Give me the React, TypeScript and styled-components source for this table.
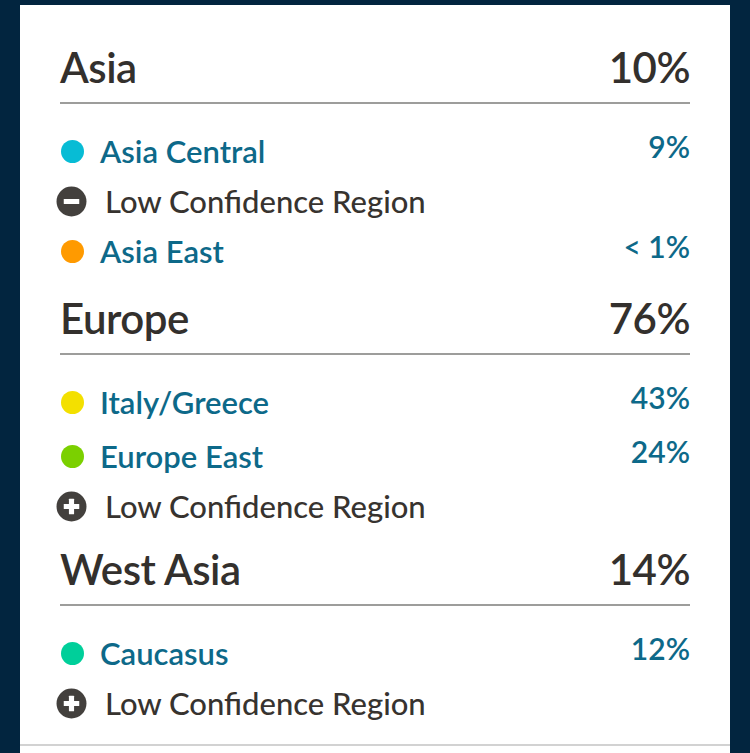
import React from "react";
import styled, { createGlobalStyle } from "styled-components";

const Global = createGlobalStyle`
  html, body { margin: 0; padding: 0; background: #02253f; }
  body { font-family: Lato, "Open Sans", sans-serif; -webkit-font-smoothing: antialiased; }
`;

const Page = styled.div`
  padding: 5px 20px 0;
  height: 748px;
  overflow: hidden;
`;

const Card = styled.div`
  background: #ffffff;
  padding-top: 22px;
`;

const Section = styled.section`
  padding: 14px 40px 0;
`;

const Header = styled.div`
  display: flex;
  justify-content: space-between;
  align-items: baseline;
  font-size: 42px;
  line-height: 52px;
  font-weight: 600;
  letter-spacing: -0.5px;
  color: #33302d;
  padding-bottom: 9px;
  border-bottom: 2px solid #9d9d9b;
`;

const HeaderPct = styled.span`
  font-weight: 600;
`;

const List = styled.div`
  padding-top: 20px;
`;

const RegionRow = styled.div`
  display: flex;
  align-items: center;
  height: 54px;
`;

const Dot = styled.span<{ $color: string }>`
  width: 23px;
  height: 23px;
  border-radius: 50%;
  background: ${(p) => p.$color};
  margin-left: 1px;
  flex: none;
`;

const Name = styled.span`
  margin-left: 16px;
  font-size: 31px;
  line-height: 40px;
  font-weight: 600;
  color: #0d6989;
  flex: 1;
`;

const Pct = styled.span`
  font-size: 30px;
  line-height: 40px;
  font-weight: 600;
  color: #0d6989;
  margin-bottom: 10px;
`;

const LowRow = styled.div`
  display: flex;
  align-items: center;
  height: 46px;
`;

const Icon = styled.svg`
  width: 31px;
  height: 31px;
  margin-left: -4px;
  flex: none;
`;

const LowText = styled.span`
  margin-left: 18px;
  font-size: 31px;
  line-height: 40px;
  font-weight: 500;
  color: #37332f;
`;

const Divider = styled.div`
  margin-top: 18px;
  height: 2px;
  background: #d2d2d2;
`;

const Footer = styled.div`
  height: 40px;
`;

type Item =
  | { kind: "region"; name: string; pct: string; color: string }
  | { kind: "low"; open: boolean };

const sections: { title: string; pct: string; items: Item[] }[] = [
  {
    title: "Asia",
    pct: "10%",
    items: [
      { kind: "region", name: "Asia Central", pct: "9%", color: "#07bcd5" },
      { kind: "low", open: true },
      { kind: "region", name: "Asia East", pct: "< 1%", color: "#ff9a00" },
    ],
  },
  {
    title: "Europe",
    pct: "76%",
    items: [
      { kind: "region", name: "Italy/Greece", pct: "43%", color: "#f3e000" },
      { kind: "region", name: "Europe East", pct: "24%", color: "#7bd000" },
      { kind: "low", open: false },
    ],
  },
  {
    title: "West Asia",
    pct: "14%",
    items: [
      { kind: "region", name: "Caucasus", pct: "12%", color: "#00cf9a" },
      { kind: "low", open: false },
    ],
  },
];

const ToggleIcon = ({ open }: { open: boolean }) => (
  <Icon viewBox="0 0 30 30">
    <circle cx="15" cy="15" r="14.5" fill="#43403d" />
    <rect x="7.5" y="12.5" width="15" height="5" rx="0.5" fill="#ffffff" />
    {!open && <rect x="12.5" y="7.5" width="5" height="15" rx="0.5" fill="#ffffff" />}
  </Icon>
);

export default function App() {
  return (
    <>
      <Global />
      <Page>
        <Card>
          {sections.map((s) => (
            <Section key={s.title}>
              <Header>
                <span>{s.title}</span>
                <HeaderPct>{s.pct}</HeaderPct>
              </Header>
              <List>
                {s.items.map((it, i) =>
                  it.kind === "region" ? (
                    <RegionRow key={i}>
                      <Dot $color={it.color} />
                      <Name>{it.name}</Name>
                      <Pct>{it.pct}</Pct>
                    </RegionRow>
                  ) : (
                    <LowRow key={i}>
                      <ToggleIcon open={it.open} />
                      <LowText>Low Confidence Region</LowText>
                    </LowRow>
                  )
                )}
              </List>
            </Section>
          ))}
          <Divider />
          <Footer />
        </Card>
      </Page>
    </>
  );
}
